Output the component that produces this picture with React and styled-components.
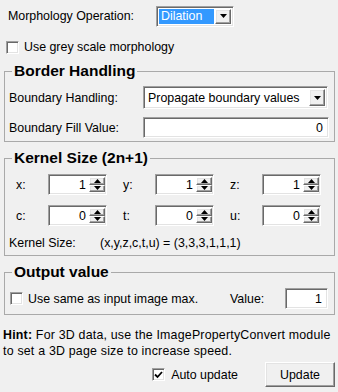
import React from "react";
import styled, { createGlobalStyle, css } from "styled-components";

const Global = createGlobalStyle`
	html, body {
		margin: 0;
		padding: 0;
		background: #f0f0f0;
	}
	body {
		font-family: "Liberation Sans", Arial, sans-serif;
		font-size: 12.4px;
		color: #000;
	}
`;

const Panel = styled.div`
	width: 338px;
	height: 392px;
	box-sizing: border-box;
	padding: 5px 3px 0 4px;
	display: flex;
	flex-direction: column;
	overflow: hidden;
`;

const sunken = css`
	box-sizing: border-box;
	background: #fff;
	border-top: 1px solid #a0a0a0;
	border-left: 1px solid #a0a0a0;
	border-right: 1px solid #fff;
	border-bottom: 1px solid #fff;
	box-shadow: inset 1px 1px 0 #696969, inset -1px -1px 0 #e3e3e3;
`;

const raised = css`
	box-sizing: border-box;
	background: #f0f0f0;
	border-top: 1px solid #fff;
	border-left: 1px solid #fff;
	border-right: 1px solid #696969;
	border-bottom: 1px solid #696969;
	box-shadow: inset -1px -1px 0 #a0a0a0, inset 1px 1px 0 #e3e3e3;
`;

const Row = styled.div`
	display: flex;
	align-items: center;
	height: ${(p) => p.h || 22}px;
	margin-top: ${(p) => p.mt || 0}px;
	padding-left: ${(p) => p.pl || 0}px;
`;

const Label = styled.span`
	box-sizing: border-box;
	width: ${(p) => (p.w ? p.w + "px" : "auto")};
	padding-left: ${(p) => p.pl || 0}px;
	flex: none;
	white-space: nowrap;
`;

const Combo = styled.div`
	${sunken};
	width: ${(p) => p.w}px;
	height: ${(p) => p.h || 21}px;
	display: flex;
	align-items: center;
	padding: 2px;
	gap: 1px;
`;

const ComboText = styled.div`
	flex: 1;
	height: 100%;
	display: flex;
	align-items: center;
	padding-left: 2px;
	white-space: nowrap;
	background: ${(p) => (p.selected ? "#3399ff" : "transparent")};
	color: ${(p) => (p.selected ? "#fff" : "#000")};
`;

const ArrowButton = styled.div`
	${raised};
	width: 16px;
	height: 100%;
	flex: none;
	display: flex;
	align-items: center;
	justify-content: center;
`;

const Arrow = ({ up }) => (
	<svg width="7" height="4" viewBox="0 0 7 4">
		<path d={up ? "M0 4 L3.5 0 L7 4 Z" : "M0 0 L7 0 L3.5 4 Z"} fill="#000" />
	</svg>
);

const Group = styled.fieldset`
	margin: ${(p) => p.mt || 0}px 0 0 0;
	padding: 0 5px ${(p) => p.pb || 4}px 4px;
	border: 1px solid #a9a9a9;
	min-width: 0;
`;

const Legend = styled.legend`
	font-size: 15.5px;
	font-weight: bold;
	padding: 0 2px;
	margin-left: 3px;
	line-height: 16px;
`;

const TextField = styled.div`
	${sunken};
	width: ${(p) => p.w}px;
	height: 21px;
	display: flex;
	align-items: center;
	justify-content: flex-end;
	padding-right: 5px;
`;

const Spin = styled.div`
	${sunken};
	width: 59px;
	height: 21px;
	display: flex;
	align-items: center;
	padding: 2px 1px 2px 2px;
`;

const SpinValue = styled.span`
	flex: 1;
	text-align: right;
	padding-right: 3px;
`;

const SpinButtons = styled.div`
	display: flex;
	flex-direction: column;
	width: 16px;
	height: 100%;
`;

const SpinButton = styled.div`
	${raised};
	flex: 1;
	display: flex;
	align-items: center;
	justify-content: center;
`;

const CheckBox = styled.span`
	box-sizing: border-box;
	width: 13px;
	height: 13px;
	flex: none;
	background: #fff;
	border-top: 1px solid #a0a0a0;
	border-left: 1px solid #a0a0a0;
	border-right: 1px solid #fff;
	border-bottom: 1px solid #fff;
	box-shadow: inset 1px 1px 0 #696969, inset -1px -1px 0 #e3e3e3;
	display: flex;
	align-items: center;
	justify-content: center;
	margin-right: ${(p) => p.mr || 5}px;
`;

const Hint = styled.p`
	margin: 12px 0 0 -1px;
	line-height: 16px;
	letter-spacing: 0.2px;
	b {
		font-weight: bold;
	}
`;

const Footer = styled.div`
	display: flex;
	align-items: center;
	justify-content: flex-end;
	margin-top: 3px;
`;

const Button = styled.div`
	${raised};
	width: 70px;
	height: 25px;
	display: flex;
	align-items: center;
	justify-content: center;
	margin-left: 27px;
`;

const Check = () => (
	<svg width="9" height="8" viewBox="0 0 9 8">
		<path d="M1 3.5 L3.5 6 L8 1" stroke="#000" strokeWidth="1.8" fill="none" />
	</svg>
);

function Spinner({ value }) {
	return (
		<Spin>
			<SpinValue>{value}</SpinValue>
			<SpinButtons>
				<SpinButton>
					<Arrow up />
				</SpinButton>
				<SpinButton>
					<Arrow />
				</SpinButton>
			</SpinButtons>
		</Spin>
	);
}

function SpinRow({ items, mt }) {
	return (
		<Row h={21} mt={mt} pl={7}>
			{items.map(([name, value], i) => (
				<React.Fragment key={name}>
					<Label w={i === 0 ? 32 : 48} pl={i === 0 ? 0 : 16}>
						{name}:
					</Label>
					<Spinner value={value} />
				</React.Fragment>
			))}
		</Row>
	);
}

export default function App() {
	return (
		<>
			<Global />
			<Panel>
				<Row h={22} pl={4}>
					<Label w={148}>Morphology Operation:</Label>
					<Combo w={78}>
						<ComboText selected>Dilation</ComboText>
						<ArrowButton>
							<Arrow />
						</ArrowButton>
					</Combo>
				</Row>
				<Row h={16} mt={12} pl={2}>
					<CheckBox />
					<Label>Use grey scale morphology</Label>
				</Row>

				<Group mt={8} pb={3}>
					<Legend>Border Handling</Legend>
					<Row h={23} mt={7}>
						<Label w={134}>Boundary Handling:</Label>
						<Combo w={185} h={23}>
							<ComboText>Propagate boundary values</ComboText>
							<ArrowButton>
								<Arrow />
							</ArrowButton>
						</Combo>
					</Row>
					<Row h={21} mt={8}>
						<Label w={134}>Boundary Fill Value:</Label>
						<TextField w={190}>0</TextField>
					</Row>
				</Group>

				<Group mt={8} pb={3}>
					<Legend>Kernel Size (2n+1)</Legend>
					<SpinRow
						mt={8}
						items={[
							["x", "1"],
							["y", "1"],
							["z", "1"],
						]}
					/>
					<SpinRow
						mt={10}
						items={[
							["c", "0"],
							["t", "0"],
							["u", "0"],
						]}
					/>
					<Row h={18} mt={8}>
						<Label w={91}>Kernel Size:</Label>
						<Label>(x,y,z,c,t,u) = (3,3,3,1,1,1)</Label>
					</Row>
				</Group>

				<Group mt={8} pb={5}>
					<Legend>Output value</Legend>
					<Row h={21} mt={8} pl={1}>
						<CheckBox />
						<Label w={202}>Use same as input image max.</Label>
						<Label w={55}>Value:</Label>
						<TextField w={43}>1</TextField>
					</Row>
				</Group>

				<Hint>
					<b>Hint:</b> For 3D data, use the ImagePropertyConvert module
					<br />
					to set a 3D page size to increase speed.
				</Hint>

				<Footer>
					<CheckBox mr={6}>
						<Check />
					</CheckBox>
					<Label>Auto update</Label>
					<Button>Update</Button>
				</Footer>
			</Panel>
		</>
	);
}
